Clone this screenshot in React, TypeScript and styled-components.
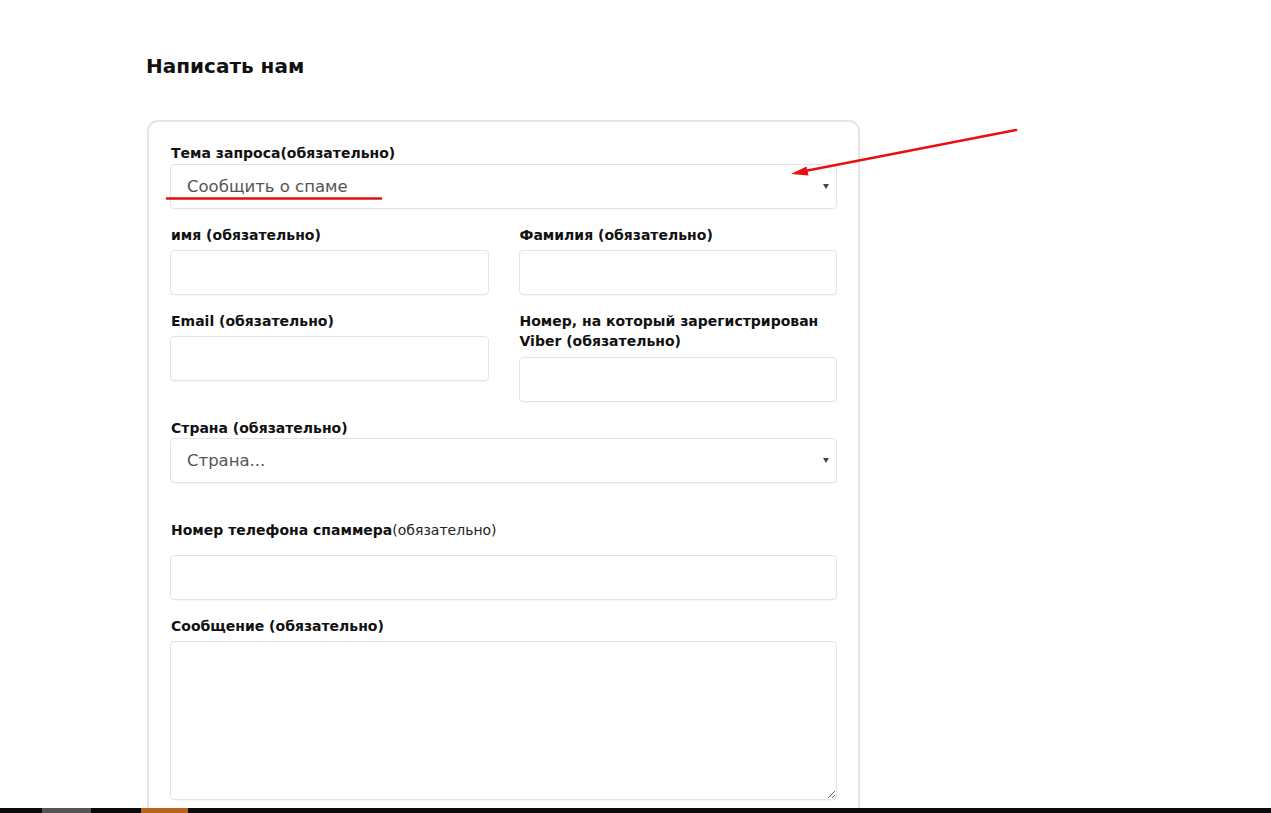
import React from "react";
import styled, { createGlobalStyle } from "styled-components";

const Global = createGlobalStyle`
  html, body { margin: 0; padding: 0; background: #fff; }
  body { font-family: "DejaVu Sans", Verdana, sans-serif; color: #111; overflow: hidden; }
  * { box-sizing: border-box; }
`;

const Page = styled.div`
  position: relative;
  width: 1271px;
  height: 813px;
  padding: 53px 0 0 146px;
  overflow: hidden;
`;

const Title = styled.h2`
  margin: 0 0 40px 0;
  font-family: "DejaVu Sans", Verdana, sans-serif;
  font-weight: bold;
  font-size: 20px;
  line-height: 27px;
  color: #111;
`;

const Card = styled.div`
  margin-left: 1px;
  width: 713px;
  border: 2px solid #e6e6e6;
  border-radius: 11px;
  padding: 21px 21px 40px 21px;
  display: flex;
  flex-direction: column;
`;

const Field = styled.div<{ $top?: number }>`
  display: flex;
  flex-direction: column;
  margin-top: ${(p) => p.$top ?? 0}px;
`;

const Row = styled.div<{ $top?: number }>`
  display: grid;
  grid-template-columns: 1fr 1fr;
  column-gap: 30px;
  align-items: start;
  margin-top: ${(p) => p.$top ?? 0}px;
`;

const Label = styled.label<{ $gap?: number }>`
  display: block;
  font-family: "DejaVu Sans", Verdana, sans-serif;
  font-weight: bold;
  font-size: 14px;
  line-height: 20px;
  color: #111;
  margin-bottom: ${(p) => p.$gap ?? 5}px;
  padding-left: 1px;
`;

const Light = styled.span`
  font-weight: normal;
  color: #222;
`;

const Input = styled.input`
  display: block;
  width: 100%;
  height: 45px;
  border: 1px solid #e4e4e4;
  border-radius: 4px;
  background: #fff;
  box-shadow: 0 1px 1px rgba(0, 0, 0, 0.03);
  outline: none;
  padding: 0 16px;
  font-family: "DejaVu Sans", Verdana, sans-serif;
  font-size: 15px;
`;

const SelectWrap = styled.div`
  position: relative;
  width: 100%;
  &::after {
    content: "";
    position: absolute;
    right: 8px;
    top: 20px;
    border-left: 3px solid transparent;
    border-right: 3px solid transparent;
    border-top: 5px solid #444;
    pointer-events: none;
  }
`;

const Select = styled.select`
  display: block;
  width: 100%;
  height: 45px;
  appearance: none;
  -webkit-appearance: none;
  border: 1px solid #e4e4e4;
  border-radius: 4px;
  background: #fff;
  box-shadow: 0 1px 1px rgba(0, 0, 0, 0.03);
  padding: 0 16px;
  font-family: "DejaVu Sans", Verdana, sans-serif;
  font-size: 16.5px;
  color: #555;
  outline: none;
`;

const TextArea = styled.textarea`
  display: block;
  width: 100%;
  height: 159px;
  border: 1px solid #e4e4e4;
  border-radius: 4px;
  background: #fff;
  box-shadow: 0 1px 1px rgba(0, 0, 0, 0.03);
  outline: none;
  padding: 10px 16px;
  font-family: "DejaVu Sans", Verdana, sans-serif;
  font-size: 15px;
`;

const Annotation = styled.svg`
  position: absolute;
  left: 0;
  top: 0;
  pointer-events: none;
`;

const Taskbar = styled.div`
  position: absolute;
  left: 0;
  bottom: 0;
  width: 100%;
  height: 5px;
  background: #0b0b0b;
  display: flex;
`;

const TaskItem = styled.div<{ $color: string; $left: number; $width: number }>`
  margin-left: ${(p) => p.$left}px;
  width: ${(p) => p.$width}px;
  height: 100%;
  background: ${(p) => p.$color};
`;

export default function App() {
  return (
    <>
      <Global />
      <Page>
        <Title>Написать нам</Title>
        <Card>
          <Field>
            <Label $gap={1}>Тема запроса(обязательно)</Label>
            <SelectWrap>
              <Select defaultValue="spam">
                <option value="spam">Сообщить о спаме</option>
              </Select>
            </SelectWrap>
          </Field>

          <Row $top={16}>
            <Field>
              <Label>имя (обязательно)</Label>
              <Input />
            </Field>
            <Field>
              <Label>Фамилия (обязательно)</Label>
              <Input />
            </Field>
          </Row>

          <Row $top={16}>
            <Field>
              <Label>Email (обязательно)</Label>
              <Input />
            </Field>
            <Field>
              <Label $gap={6}>Номер, на который зарегистрирован Viber (обязательно)</Label>
              <Input />
            </Field>
          </Row>

          <Field $top={16}>
            <Label $gap={0}>Страна (обязательно)</Label>
            <SelectWrap>
              <Select defaultValue="">
                <option value="">Страна...</option>
              </Select>
            </SelectWrap>
          </Field>

          <Field $top={37}>
            <Label $gap={15}>
              Номер телефона спаммера<Light>(обязательно)</Light>
            </Label>
            <Input />
          </Field>

          <Field $top={16}>
            <Label>Сообщение (обязательно)</Label>
            <TextArea />
          </Field>
        </Card>

        <Annotation width="1271" height="813" viewBox="0 0 1271 813">
          <line x1="167" y1="198.5" x2="381" y2="198.5" stroke="#e01010" strokeWidth="2.5" strokeLinecap="round" />
          <line x1="1016" y1="130" x2="805" y2="171" stroke="#e81010" strokeWidth="2.6" strokeLinecap="round" />
          <polygon points="791,174 808.5,175.5 806.5,166.5" fill="#e81010" />
        </Annotation>

        <Taskbar>
          <TaskItem $color="#555" $left={42} $width={49} />
          <TaskItem $color="#b8621b" $left={50} $width={47} />
        </Taskbar>
      </Page>
    </>
  );
}
